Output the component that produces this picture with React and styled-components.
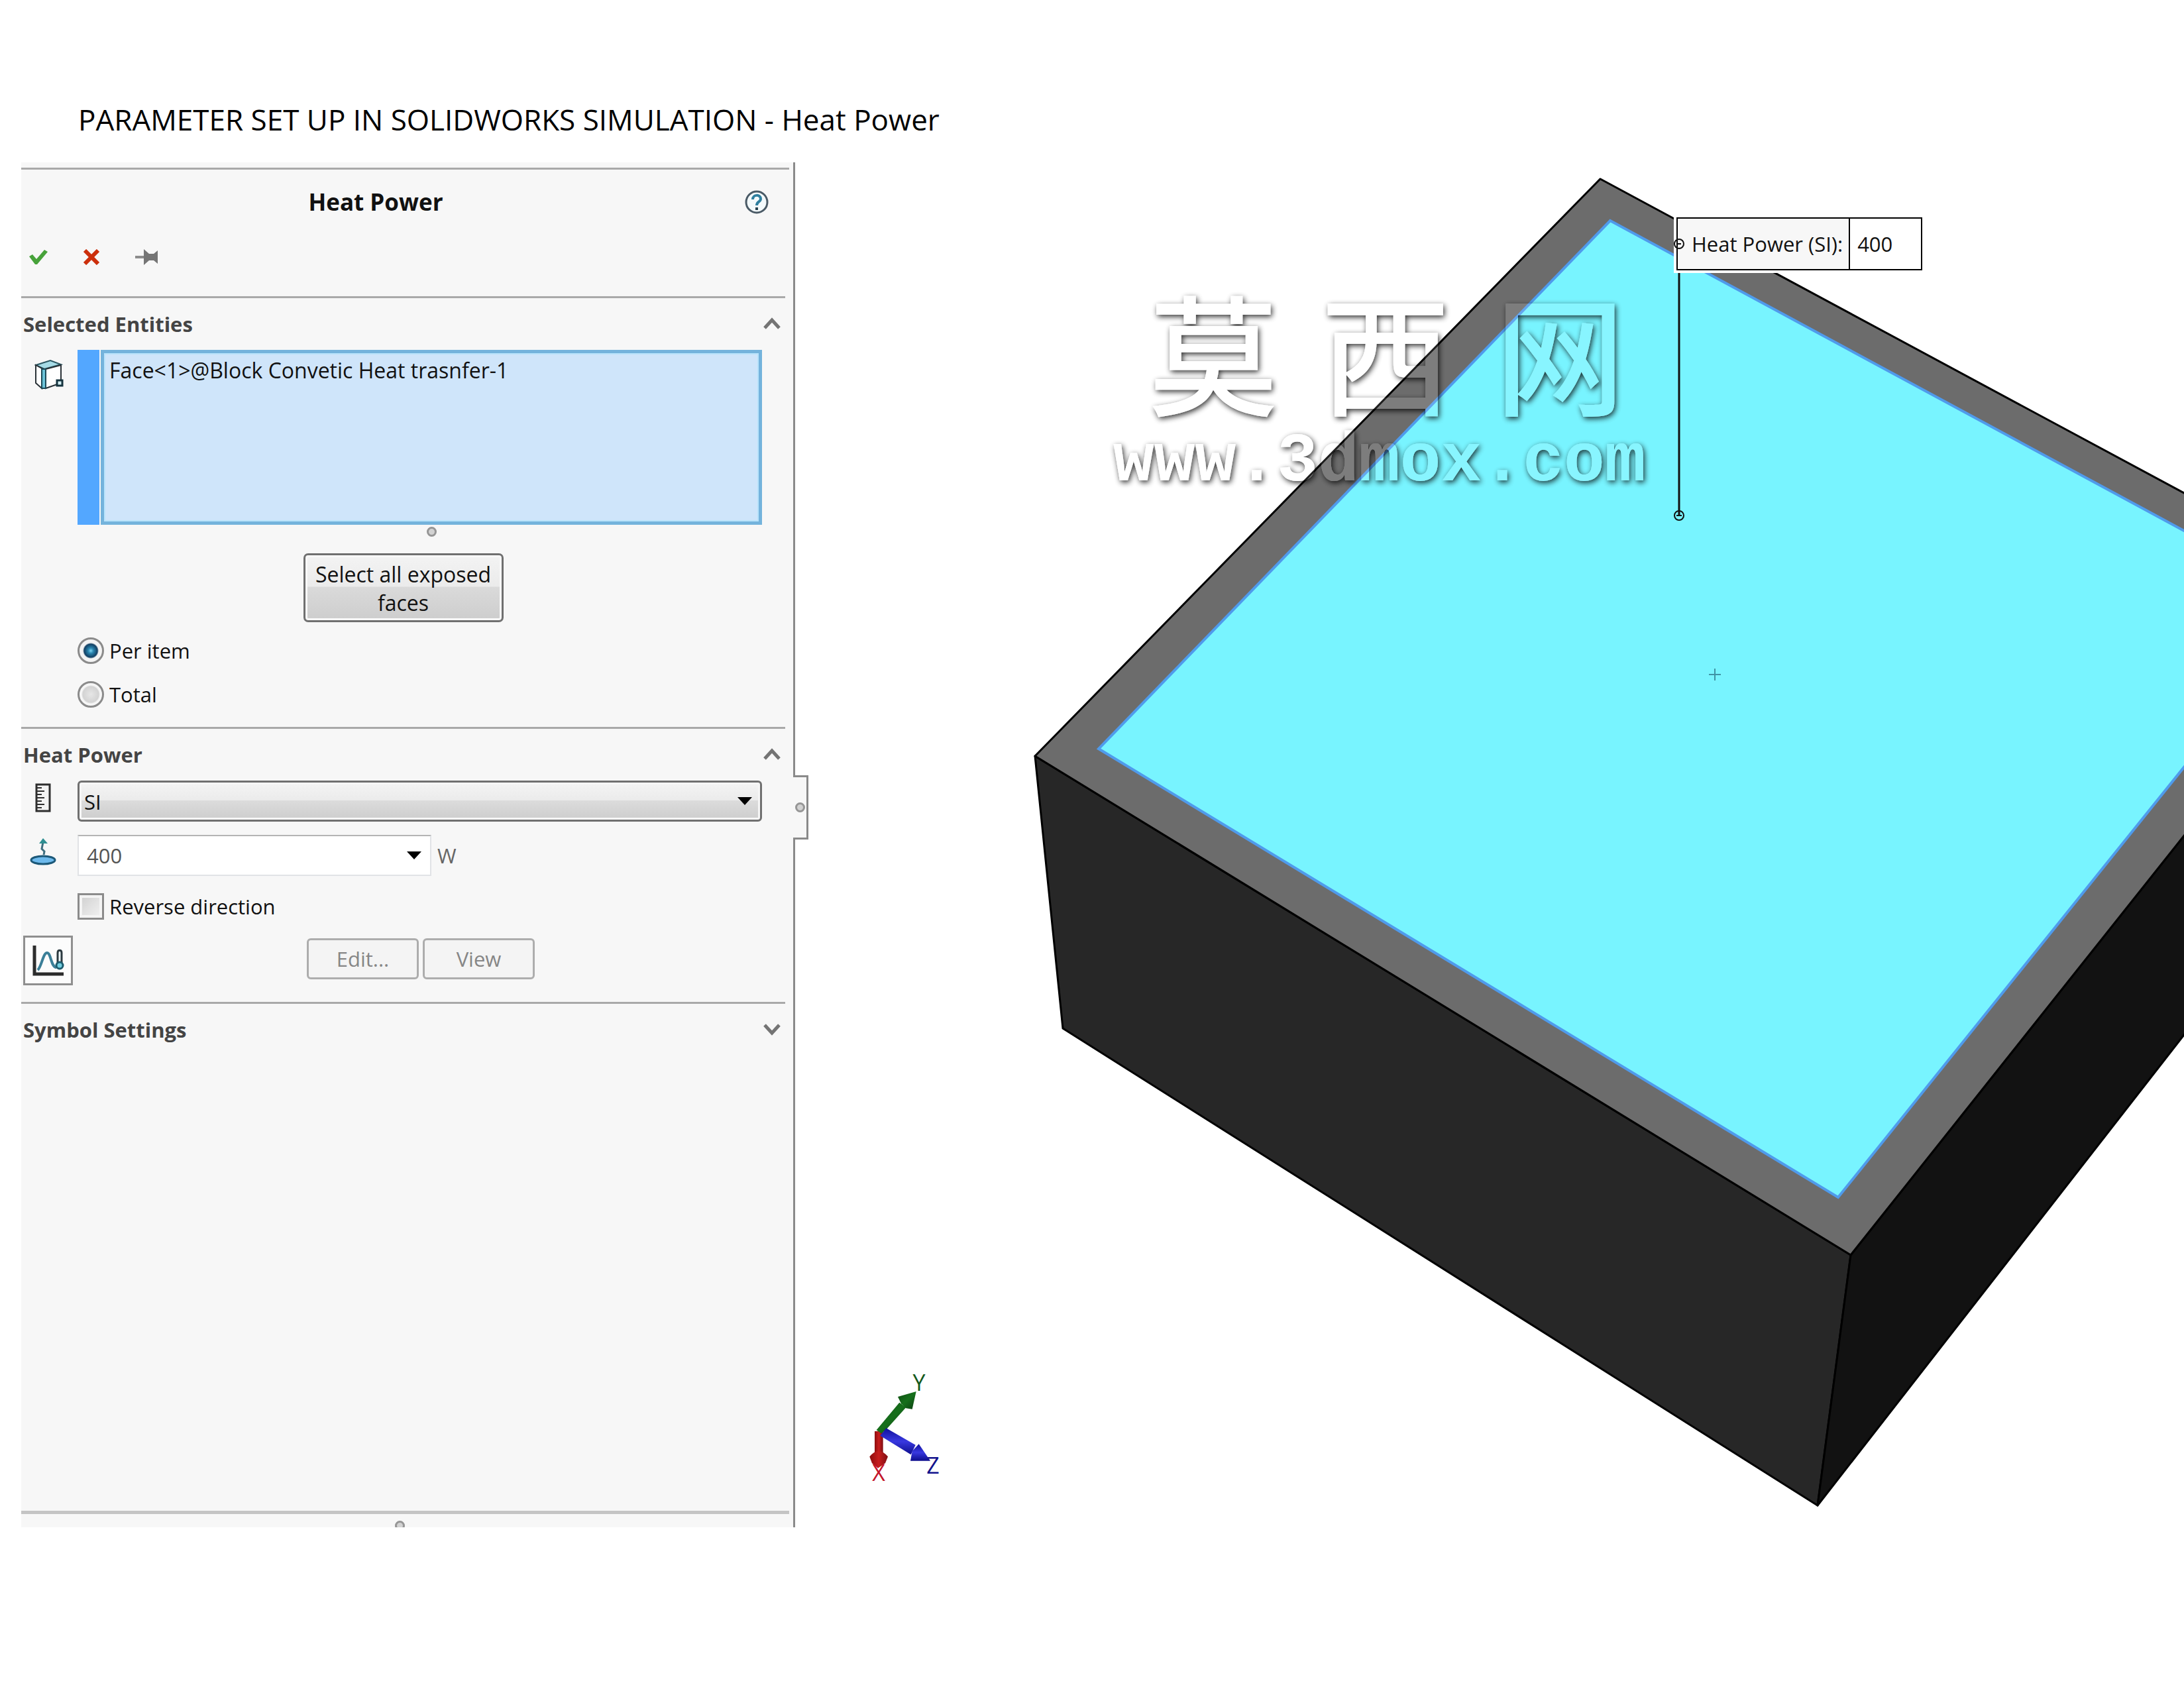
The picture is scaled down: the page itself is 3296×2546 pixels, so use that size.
import React, { useState } from 'react';
import styled, { createGlobalStyle } from 'styled-components';

const GlobalStyle = createGlobalStyle`
  * {
    box-sizing: border-box;
  }

  body {
    margin: 0;
    background: #fff;
    color: #111;
    font-family: 'Open Sans', 'Noto Sans', sans-serif;
    font-size: 31px;
  }

  button,
  input,
  select {
    font: inherit;
    color: inherit;
  }
`;

const Chevron = ({ open }) => (
  <svg width="30" height="20" viewBox="0 0 30 20" aria-hidden="true">
    <path
      d={open ? 'M4 16 L15 4 L26 16' : 'M4 3 L15 15 L26 3'}
      fill="none"
      stroke="#747474"
      strokeWidth="5"
    />
  </svg>
);

const HelpIcon = () => (
  <svg width="36" height="36" viewBox="0 0 36 36" aria-hidden="true">
    <circle cx="18" cy="18" r="16" fill="#f4fafc" stroke="#4a5a66" strokeWidth="3" />
    <path
      d="M12 14 C12 6 24 6 24 13 C24 18 18 17 18 23"
      fill="none"
      stroke="#2f7f9f"
      strokeWidth="4"
    />
    <rect x="16" y="26" width="4" height="4" fill="#26424f" />
  </svg>
);

const CheckIcon = () => (
  <svg width="30" height="24" viewBox="0 0 30 24" aria-hidden="true">
    <path d="M1 11 L6 8 L12 15 L24 1 L29 4 L13 23 L10 23 Z" fill="#47a23a" />
  </svg>
);

const CrossIcon = () => (
  <svg width="26" height="24" viewBox="0 0 26 24" aria-hidden="true">
    <path d="M3 2 L23 22 M23 2 L3 22" stroke="#cc2f0c" strokeWidth="6" />
  </svg>
);

const PinIcon = () => (
  <svg width="38" height="24" viewBox="0 0 38 24" aria-hidden="true">
    <path d="M1 10 H15 V14 H1 Z" fill="#8c8c8c" />
    <path d="M14 0 L22 7 H29 L35 2 V22 L29 17 H22 L14 24 Z" fill="#757575" />
  </svg>
);

const FaceIcon = () => (
  <svg width="44" height="46" viewBox="0 0 44 46" aria-hidden="true">
    <path d="M2 9 L24 2 L40 8 L15 15 Z" fill="#a6dbe6" stroke="#2a5560" strokeWidth="2" />
    <path d="M2 9 L11 14 V44 L2 36 Z" fill="#fff" stroke="#2b3338" strokeWidth="2" />
    <path d="M17 15 L40 9 V36 L17 44 Z" fill="#fff" stroke="#2b3338" strokeWidth="2" />
    <rect x="11" y="15" width="6" height="29" fill="#6cc3d8" stroke="#1d4957" strokeWidth="2" />
    <rect x="34" y="32" width="8" height="8" fill="#d5f0f5" stroke="#16343f" strokeWidth="3" />
  </svg>
);

const RulerIcon = () => (
  <svg width="24" height="44" viewBox="0 0 24 44" aria-hidden="true">
    <rect x="2" y="2" width="20" height="40" fill="#f3f3f3" stroke="#2e2e2e" strokeWidth="3" />
    <path
      d="M2 7 H10 M2 12 H14 M2 17 H10 M2 22 H14 M2 27 H10 M2 32 H14 M2 37 H10"
      stroke="#2e2e2e"
      strokeWidth="2"
    />
  </svg>
);

const FluxIcon = () => (
  <svg width="40" height="42" viewBox="0 0 40 42" aria-hidden="true">
    <ellipse cx="20" cy="34" rx="18" ry="6" fill="#6db9ec" stroke="#1c5878" strokeWidth="3" />
    <path d="M21 26 L22 21 L18 17 L20 7" fill="none" stroke="#3f6f80" strokeWidth="3" />
    <path d="M14 9 L20 1 L27 9 Z" fill="#2f8f92" />
  </svg>
);

const CurveIcon = () => (
  <svg width="48" height="48" viewBox="0 0 48 48" aria-hidden="true">
    <path d="M3 1 V44 H47" fill="none" stroke="#2c2c2c" strokeWidth="5" />
    <path
      d="M8 38 C14 32 16 12 22 12 C28 12 28 34 36 34"
      fill="none"
      stroke="#3b7f98"
      strokeWidth="4"
    />
    <path d="M38 12 C38 7 44 7 44 12 V27 H38 Z" fill="#eef7fa" stroke="#2c3a40" strokeWidth="3" />
    <circle cx="41" cy="31" r="5" fill="#74cfe0" stroke="#1d5c6e" strokeWidth="3" />
  </svg>
);

const DropArrow = () => (
  <svg width="22" height="12" viewBox="0 0 22 12" aria-hidden="true">
    <path d="M0 0 H22 L11 12 Z" fill="#000" />
  </svg>
);

const Model = () => (
  <Canvas aria-label="Block model">
    <defs>
      <filter id="emboss" x="-10%" y="-20%" width="120%" height="140%">
        <feGaussianBlur in="SourceAlpha" stdDeviation="4" result="soft" />
        <feOffset in="soft" dx="2" dy="3" result="low" />
        <feComposite in="low" in2="SourceAlpha" operator="out" result="shade" />
        <feComponentTransfer in="shade" result="dark">
          <feFuncA type="linear" slope="0.8" />
        </feComponentTransfer>
        <feComponentTransfer in="SourceGraphic" result="face">
          <feFuncA type="linear" slope="0.12" />
        </feComponentTransfer>
        <feMerge>
          <feMergeNode in="dark" />
          <feMergeNode in="face" />
        </feMerge>
      </filter>
      <linearGradient id="axisX" x1="0" x2="1" y1="0" y2="0">
        <stop offset="0" stopColor="#8c0d0d" />
        <stop offset="0.5" stopColor="#c81d1d" />
        <stop offset="1" stopColor="#7d0f14" />
      </linearGradient>
      <linearGradient id="axisY" x1="0" x2="1" y1="0" y2="1">
        <stop offset="0" stopColor="#0f4a12" />
        <stop offset="0.5" stopColor="#16701b" />
        <stop offset="1" stopColor="#0c3d10" />
      </linearGradient>
      <linearGradient id="axisZ" x1="0" x2="0" y1="0" y2="1">
        <stop offset="0" stopColor="#10109a" />
        <stop offset="0.5" stopColor="#3838e0" />
        <stop offset="1" stopColor="#0d0d8c" />
      </linearGradient>
    </defs>

    <g stroke="#000" strokeWidth="3" strokeLinejoin="round">
      <polygon points="362,896 1593,1649 1543,2027 404,1307" fill="#272727" />
      <polygon points="1593,1649 2384,654 2366,970 1543,2027" fill="#121212" />
      <polygon points="1215,25 2384,654 1593,1649 362,896" fill="#6c6c6c" />
    </g>
    <polygon
      points="1230,88 2296,664 1574,1562 458,885"
      fill="#78f4ff"
      stroke="#4f9bec"
      strokeWidth="4"
    />
    <path d="M1379 773 H1397 M1388 764 V782" stroke="#3f93a5" strokeWidth="2" />

    {/* coordinate triad */}
    <g transform="translate(80 1805) scale(0.3333)">
      <path d="M120 330 H158 V435 H120 Z" fill="url(#axisX)" />
      <path d="M97 445 Q138 395 180 445 L168 475 L135 497 L108 475 Z" fill="url(#axisX)" />
      <path d="M128 325 L232 200 L262 222 L170 325 L150 340 Z" fill="url(#axisY)" />
      <path d="M308 150 L225 174 L240 205 L262 226 L290 230 Z" fill="url(#axisY)" />
      <path d="M145 350 L172 316 L305 392 L284 436 Z" fill="url(#axisZ)" />
      <path d="M372 464 L320 388 L290 420 L282 464 Z" fill="url(#axisZ)" />
    </g>
    <AxisLabel x="187" y="1854" fill="#14591c">Y</AxisLabel>
    <AxisLabel x="126" y="1990" fill="#c3142a">X</AxisLabel>
    <AxisLabel x="208" y="1979" fill="#12128c">Z</AxisLabel>

    <g filter="url(#emboss)">
      <MarkName x="631" y="367">莫</MarkName>
      <MarkName x="891" y="367">西</MarkName>
      <MarkName x="1154" y="367">网</MarkName>
      <MarkUrl x="480" y="480">www.3dmox.com</MarkUrl>
    </g>

    {/* leader from the callout down to the face */}
    <path d="M1334 165 V533" stroke="#111" strokeWidth="3" />
    <circle cx="1334" cy="533" r="7" fill="none" stroke="#111" strokeWidth="2" />
    <path d="M1330 533 H1338" stroke="#111" strokeWidth="2" />
  </Canvas>
);

const Section = ({ title, open, children }) => (
  <SectionBox>
    <SectionHead aria-expanded={open}>
      {title}
      <Chevron open={open} />
    </SectionHead>
    {open && children}
  </SectionBox>
);

const App = () => {
  const [mode, setMode] = useState('item');
  const [power, setPower] = useState('400');
  const [reverse, setReverse] = useState(false);

  return (
    <Page>
      <GlobalStyle />
      <PageTitle>PARAMETER SET UP IN SOLIDWORKS SIMULATION - Heat Power</PageTitle>
      <Main>
        <Panel>
          <PanelHead>
            <PanelTitle>Heat Power</PanelTitle>
            <IconBtn aria-label="Help">
              <HelpIcon />
            </IconBtn>
          </PanelHead>
          <Toolbar>
            <IconBtn aria-label="OK">
              <CheckIcon />
            </IconBtn>
            <IconBtn aria-label="Cancel">
              <CrossIcon />
            </IconBtn>
            <IconBtn aria-label="Keep visible">
              <PinIcon />
            </IconBtn>
          </Toolbar>

          <Section title="Selected Entities" open>
            <Row>
              <FaceCell>
                <FaceIcon />
              </FaceCell>
              <Strip />
              <EntityList>
                <li>Face&lt;1&gt;@Block Convetic Heat trasnfer-1</li>
              </EntityList>
            </Row>
            <GripRow>
              <Grip />
            </GripRow>
            <SelectAllBtn>Select all exposed faces</SelectAllBtn>
            <Options>
              <Option>
                <Radio
                  type="radio"
                  name="mode"
                  checked={mode === 'item'}
                  onChange={() => setMode('item')}
                />
                Per item
              </Option>
              <Option>
                <Radio
                  type="radio"
                  name="mode"
                  checked={mode === 'total'}
                  onChange={() => setMode('total')}
                />
                Total
              </Option>
            </Options>
          </Section>

          <Section title="Heat Power" open>
            <Fields>
              <Row>
                <IconCell>
                  <RulerIcon />
                </IconCell>
                <Combo wide>
                  <UnitSelect aria-label="Unit" defaultValue="SI">
                    <option>SI</option>
                  </UnitSelect>
                  <DropArrow />
                </Combo>
              </Row>
              <Row>
                <IconCell>
                  <FluxIcon />
                </IconCell>
                <Combo>
                  <PowerInput
                    id="power"
                    aria-label="Heat power"
                    value={power}
                    onChange={e => setPower(e.target.value)}
                  />
                  <DropArrow />
                </Combo>
                <Unit htmlFor="power">W</Unit>
              </Row>
            </Fields>
            <Options>
              <Option>
                <CheckBox
                  type="checkbox"
                  checked={reverse}
                  onChange={e => setReverse(e.target.checked)}
                />
                Reverse direction
              </Option>
            </Options>
            <CurveRow>
              <CurveBtn aria-label="Use time curve">
                <CurveIcon />
              </CurveBtn>
              <BtnPair>
                <SmallBtn disabled>Edit...</SmallBtn>
                <SmallBtn disabled>View</SmallBtn>
              </BtnPair>
            </CurveRow>
          </Section>

          <Section title="Symbol Settings" open={false} />

          <PanelFoot>
            <Grip />
          </PanelFoot>
          <Handle>
            <Grip />
          </Handle>
        </Panel>

        <Viewport>
          <Model />
          <Callout>
            <CalloutLabel htmlFor="calloutValue">Heat Power (SI):</CalloutLabel>
            <CalloutInput
              id="calloutValue"
              value={power}
              onChange={e => setPower(e.target.value)}
            />
            <CalloutPin width="18" height="18" viewBox="0 0 18 18">
              <circle cx="9" cy="9" r="7" fill="none" stroke="#111" strokeWidth="2" />
              <path d="M6 9 H12" stroke="#111" strokeWidth="2" />
            </CalloutPin>
          </Callout>
        </Viewport>
      </Main>
    </Page>
  );
};

const Page = styled.div`
  min-height: 100vh;
  display: flex;
  flex-direction: column;
  padding-bottom: 241px;
  overflow: hidden;
`;

const PageTitle = styled.h1`
  margin: 0;
  padding: 148px 0 33px 118px;
  font-size: 44px;
  line-height: 64px;
  font-weight: 400;
  color: #000;
`;

const Main = styled.main`
  flex: 1;
  display: grid;
  grid-template-columns: 1168px 1fr;
  padding-left: 32px;
`;

const Panel = styled.section`
  position: relative;
  display: flex;
  flex-direction: column;
  padding-top: 8px;
  background: #f7f7f7;
  border-right: 3px solid #8a8a8a;
`;

const PanelHead = styled.div`
  display: grid;
  grid-template-columns: 1fr auto;
  align-items: center;
  height: 101px;
  margin-right: 6px;
  padding-right: 31px;
  border-top: 3px solid #a9a9a9;
`;

const PanelTitle = styled.h2`
  margin: 0;
  padding-right: 22px;
  font-size: 35px;
  line-height: 44px;
  text-align: center;
`;

const IconBtn = styled.button`
  display: flex;
  padding: 0;
  border: 0;
  background: none;
`;

const Toolbar = styled.div`
  display: flex;
  align-items: center;
  gap: 52px;
  height: 68px;
  margin-bottom: 25px;
  padding-left: 11px;
`;

const SectionBox = styled.section`
  display: flex;
  flex-direction: column;
  margin-right: 12px;
  border-top: 3px solid #a9a9a9;
`;

const SectionHead = styled.button`
  display: flex;
  justify-content: space-between;
  align-items: center;
  height: 78px;
  padding: 0 5px 0 3px;
  border: 0;
  background: none;
  color: #444;
  font-size: 31px;
  font-weight: 700;
`;

const Row = styled.div`
  display: flex;
  padding-right: 35px;
`;

const FaceCell = styled.div`
  width: 85px;
  padding: 14px 0 0 20px;
`;

const IconCell = styled.div`
  display: flex;
  justify-content: center;
  align-items: flex-start;
  width: 85px;
  padding: 4px 19px 0 0;
`;

const Strip = styled.div`
  width: 33px;
  margin-right: 2px;
  background: #53a7ff;
`;

const EntityList = styled.ul`
  flex: 1;
  height: 264px;
  margin: 0;
  padding: 6px 8px;
  list-style: none;
  font-size: 32px;
  line-height: 40px;
  background: #cfe5fa;
  border: 5px solid #74b3dc;
  box-shadow: inset 0 0 0 2px #b9e3fb;
`;

const GripRow = styled.div`
  display: flex;
  justify-content: center;
  padding: 3px 35px 0 120px;
`;

const Grip = styled.div`
  width: 15px;
  height: 15px;
  border: 3px solid #969696;
  border-radius: 50%;
  background: #d2d2d2;
`;

const SelectAllBtn = styled.button`
  align-self: center;
  width: 302px;
  height: 104px;
  margin: 25px 0 23px;
  padding: 2px 12px 0;
  font-size: 32px;
  line-height: 43px;
  border: 3px solid #707070;
  border-radius: 7px;
  background: linear-gradient(#f3f3f3, #ebebeb 48%, #dadada 49%, #cdcdcd);
  box-shadow: inset 0 0 0 3px #f8f8f8;
`;

const Options = styled.div`
  display: flex;
  flex-direction: column;
  align-items: flex-start;
  gap: 26px;
  padding: 0 0 29px 85px;
`;

const Option = styled.label`
  display: flex;
  align-items: center;
  gap: 8px;
  height: 40px;
`;

const Radio = styled.input`
  appearance: none;
  width: 40px;
  height: 40px;
  margin: 0;
  border: 3px solid #8b8b8b;
  border-radius: 50%;
  background: ${props =>
    props.checked
      ? 'radial-gradient(circle, #7fd4f2 0, #2a86b0 4px, #123f63 10px, #f4f4f4 12px)'
      : 'radial-gradient(circle, #e6e6e6 0, #d3d3d3 12px, #f6f6f6 14px)'};
`;

const CheckBox = styled.input`
  appearance: none;
  width: 40px;
  height: 40px;
  margin: 0;
  border: 3px solid #8b8b8b;
  background: linear-gradient(135deg, #cfcfcf, #f3f3f3);
  box-shadow: inset 0 0 0 4px #f4f4f4;
`;

const Fields = styled.div`
  display: flex;
  flex-direction: column;
  gap: 20px;
  padding-bottom: 26px;
`;

/* field and arrow share one grid cell */
const Combo = styled.div`
  display: grid;
  align-items: center;
  width: ${props => (props.wide ? 'auto' : '534px')};
  flex: ${props => (props.wide ? 1 : 'none')};

  > * {
    grid-area: 1 / 1;
  }

  > svg {
    justify-self: end;
    margin-right: 15px;
    pointer-events: none;
  }
`;

const UnitSelect = styled.select`
  appearance: none;
  width: 100%;
  height: 62px;
  padding: 2px 7px 0;
  border: 3px solid #707070;
  border-radius: 6px;
  background: linear-gradient(#f4f4f4, #ebebeb 48%, #dcdcdc 49%, #cdcdcd);
  box-shadow: inset 0 0 0 3px #f6f6f6;
`;

const PowerInput = styled.input`
  width: 100%;
  height: 62px;
  padding: 0 12px;
  border: 2px solid #e1e3e6;
  border-top-color: #b4b4b4;
  background: #fff;
  color: #555;
`;

const Unit = styled.label`
  padding-left: 9px;
  line-height: 62px;
  color: #666;
`;

const CurveRow = styled.div`
  display: flex;
  align-items: flex-start;
  height: 75px;
  margin: -5px 35px 25px 3px;
`;

const CurveBtn = styled.button`
  display: flex;
  align-items: center;
  justify-content: center;
  width: 75px;
  height: 75px;
  padding: 0;
  border: 3px solid #8f8f8f;
  background: #fcfcfc;
`;

const BtnPair = styled.div`
  flex: 1;
  display: flex;
  justify-content: center;
  gap: 6px;
  padding: 4px 0 0 10px;
`;

const SmallBtn = styled.button`
  width: 169px;
  height: 62px;
  padding: 0;
  border: 3px solid #adadad;
  border-radius: 6px;
  background: #f4f4f4;
  color: #868686;
`;

const PanelFoot = styled.div`
  display: flex;
  justify-content: center;
  height: 25px;
  margin: auto 6px 0 0;
  padding: 10px 16px 0 0;
  border-top: 5px solid #c4c4c4;
  overflow: hidden;
`;

const Handle = styled.div`
  position: absolute;
  top: 925px;
  right: -23px;
  display: flex;
  align-items: center;
  width: 23px;
  height: 97px;
  padding-left: 3px;
  border: 3px solid #8a8a8a;
  border-left: 0;
  background: #f7f7f7;
  z-index: 1;
`;

const Viewport = styled.section`
  position: relative;
  overflow: hidden;
`;

const Canvas = styled.svg`
  position: absolute;
  width: 100%;
  height: 100%;
`;

const AxisLabel = styled.text`
  font-size: 34px;
  text-anchor: middle;
`;

const MarkName = styled.text`
  font-family: 'Liberation Sans', 'Noto Sans CJK SC', sans-serif;
  font-size: 196px;
  font-weight: 500;
  text-anchor: middle;
  fill: #fff;
`;

const MarkUrl = styled.text`
  font-family: 'Liberation Mono', monospace;
  font-size: 103px;
  font-weight: 700;
  fill: #fff;
`;

const Callout = styled.div`
  position: absolute;
  top: 83px;
  left: 1330px;
  display: flex;
  height: 80px;
  border: 2px solid #000;
  background: #f7f7f7;
  box-shadow: -2px 2px 0 2px #fff;
`;

const CalloutLabel = styled.label`
  padding: 0 9px 0 21px;
  line-height: 76px;
`;

const CalloutInput = styled.input`
  width: 109px;
  padding: 0 11px;
  border: 0;
  border-left: 2px solid #000;
  background: #fff;
`;

const CalloutPin = styled.svg`
  position: absolute;
  top: 29px;
  left: -7px;
`;

export default App;
